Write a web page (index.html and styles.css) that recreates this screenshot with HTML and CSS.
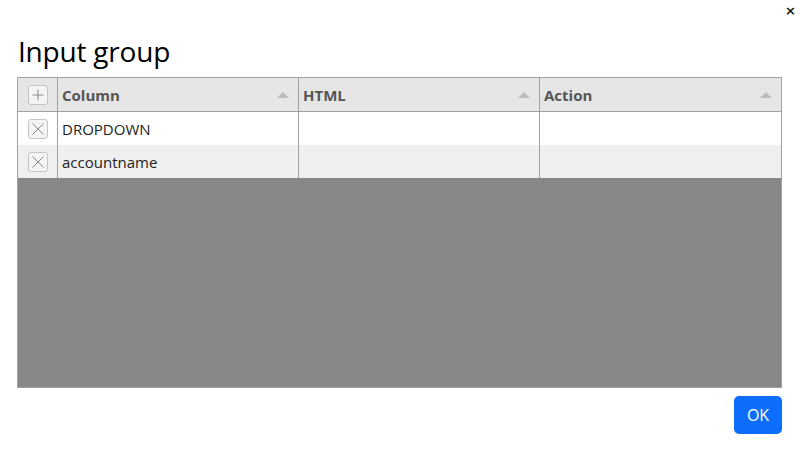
FILE: index.html
```html
<!DOCTYPE html>
<html>
<head>
<meta charset="utf-8">
<link rel="stylesheet" href="styles.css">
</head>
<body>
<div class="dialog">
  <div class="topbar"><span class="close">×</span></div>
  <h1 class="title">Input group</h1>
  <div class="grid">
    <div class="row head">
      <div class="cell icon-cell"><span class="ibox"><svg width="14" height="14" viewBox="0 0 14 14"><path d="M7 1.5V12.5M1.5 7H12.5" stroke="#888" stroke-width="1"/></svg></span></div>
      <div class="cell col">Column<span class="sort"></span></div>
      <div class="cell col">HTML<span class="sort"></span></div>
      <div class="cell col last">Action<span class="sort"></span></div>
    </div>
    <div class="row">
      <div class="cell icon-cell"><span class="ibox"><svg width="14" height="14" viewBox="0 0 14 14"><path d="M1.5 1.5L12.5 12.5M12.5 1.5L1.5 12.5" stroke="#888" stroke-width="1"/></svg></span></div>
      <div class="cell col">DROPDOWN</div>
      <div class="cell col"></div>
      <div class="cell col last"></div>
    </div>
    <div class="row alt">
      <div class="cell icon-cell"><span class="ibox"><svg width="14" height="14" viewBox="0 0 14 14"><path d="M1.5 1.5L12.5 12.5M12.5 1.5L1.5 12.5" stroke="#888" stroke-width="1"/></svg></span></div>
      <div class="cell col">accountname</div>
      <div class="cell col"></div>
      <div class="cell col last"></div>
    </div>
    <div class="empty"></div>
  </div>
  <div class="footer"><button class="ok">OK</button></div>
</div>
</body>
</html>
```
FILE: styles.css
```css
html, body { margin: 0; padding: 0; background: #fff; }
body { font-family: "Open Sans", "Noto Sans", sans-serif; color: #222; width: 800px; height: 450px; overflow: hidden; }
.dialog { padding: 0 18px 0 17px; }
.topbar { height: 30px; display: flex; justify-content: flex-end; }
.close { font-family: "DejaVu Sans", sans-serif; font-size: 13px; font-weight: bold; color: #111; margin-top: 3px; margin-right: -14px; line-height: 16px; }
.title { margin: 0 0 0 1px; font-weight: 400; font-size: 28px; line-height: 42px; height: 47px; color: #000; letter-spacing: -0.2px; }
.grid { border: 1px solid #a0a0a0; width: 763px; box-sizing: content-box; }
.row { display: flex; height: 33px; background: #fff; }
.row.alt { background: #efefef; }
.row.head { height: 33px; background: #e6e6e6; border-bottom: 1px solid #a0a0a0; }
.cell { box-sizing: border-box; display: flex; align-items: center; font-size: 15px; padding-top: 1px; }
.icon-cell { width: 40px; border-right: 1px solid #a0a0a0; justify-content: center; padding-top: 0; }
.col { width: 241px; border-right: 1px solid #a0a0a0; padding-left: 4px; position: relative; }
.col.last { border-right: none; flex: 1; }
.head .col { font-weight: 700; color: #555; }
.ibox { width: 18px; height: 18px; border: 1px solid #c4c4c4; border-radius: 3px; background: #f4f4f4; display: flex; align-items: center; justify-content: center; }
.sort { position: absolute; right: 9px; top: 14px; width: 0; height: 0; border-left: 6px solid transparent; border-right: 6px solid transparent; border-bottom: 6px solid #bdbdbd; }
.empty { height: 209px; background: #878787; }
.footer { display: flex; justify-content: flex-end; padding-top: 8px; }
.ok { font-family: "Open Sans", "Noto Sans", sans-serif; background: #0d6efd; color: #fff; border: none; border-radius: 5px; width: 48px; height: 38px; font-size: 16px; padding: 0; margin-right: 0; }
```
